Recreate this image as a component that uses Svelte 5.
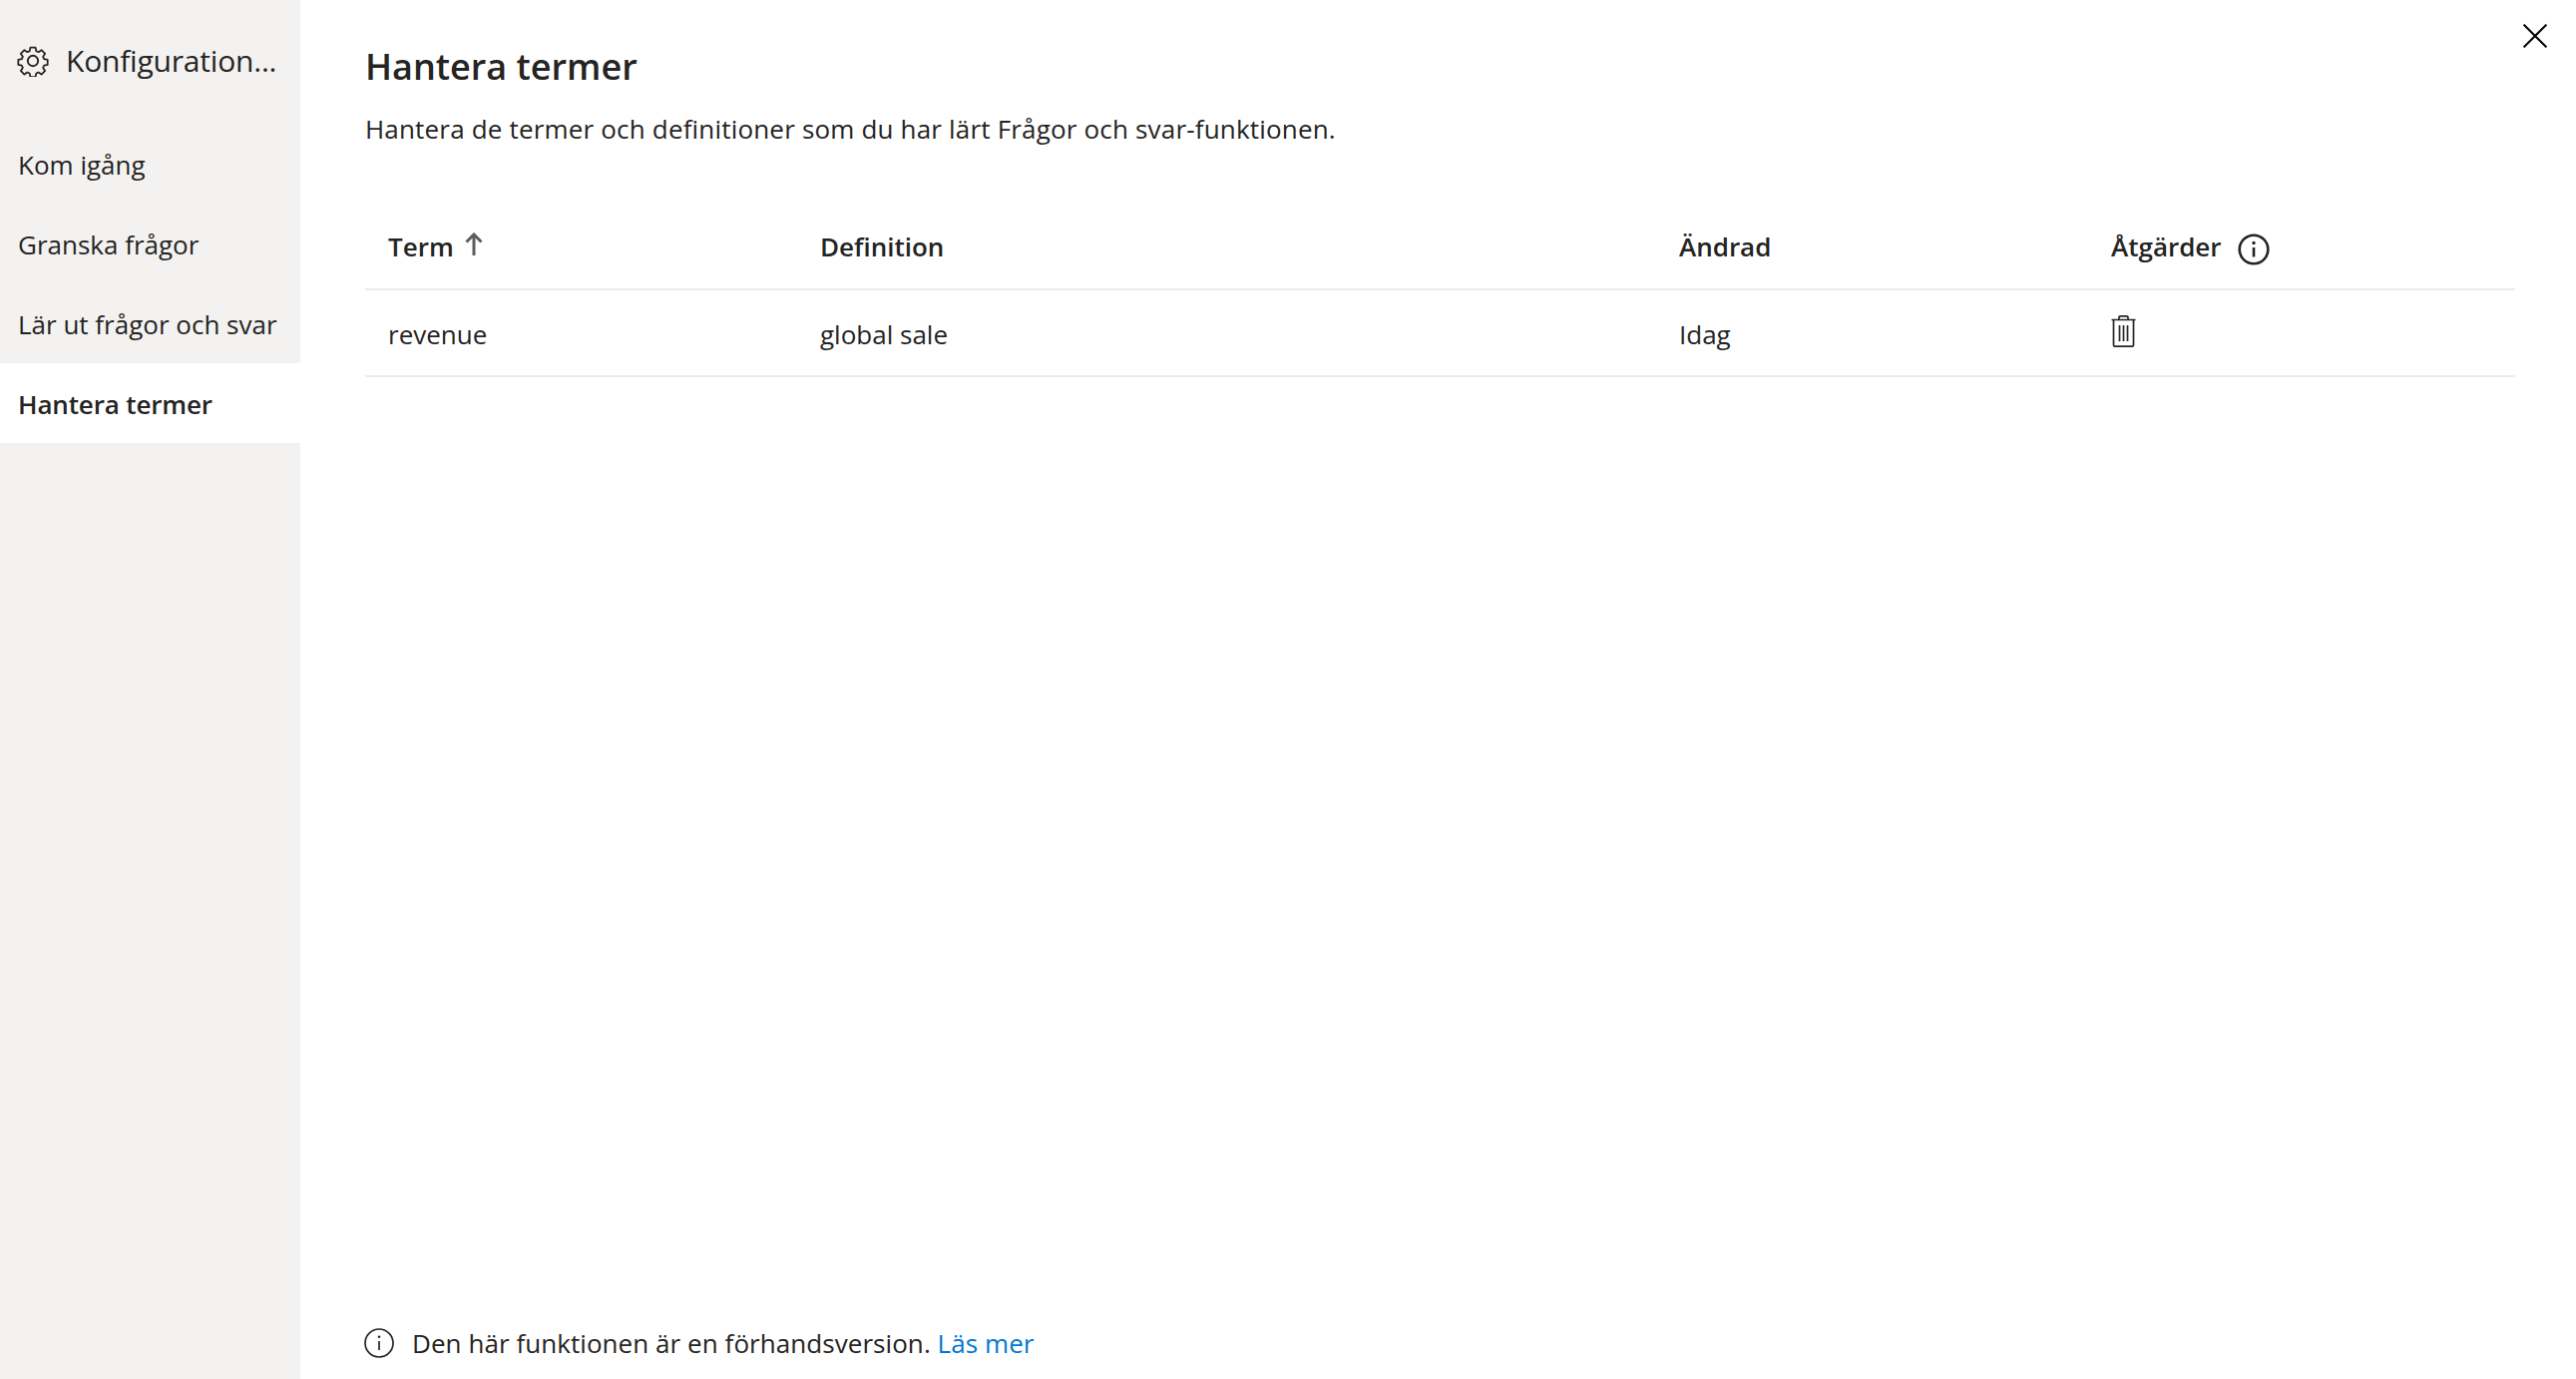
<script>
  const navItems = [
    { label: 'Kom igång', active: false },
    { label: 'Granska frågor', active: false },
    { label: 'Lär ut frågor och svar', active: false },
    { label: 'Hantera termer', active: true },
  ];
  const terms = [{ term: 'revenue', definition: 'global sale', changed: 'Idag' }];
</script>

<div class="page">
  <aside class="sidebar">
    <div class="sidebar-head">
      <svg class="gear" viewBox="0 0 32 32" fill="none" stroke="#252423" stroke-width="1.9" stroke-linejoin="round">
        <path d="M13.2 1.6h5.6l.8 3.9 2.4 1 3.3-2.2 3.9 3.9-2.2 3.3 1 2.4 3.9.8v5.6l-3.9.8-1 2.4 2.2 3.3-3.9 3.9-3.3-2.2-2.4 1-.8 3.9h-5.6l-.8-3.9-2.4-1-3.3 2.2-3.900-3.900 2.200-3.300-1-2.400-3.900-.8v-5.600l3.900-.8 1-2.400-2.200-3.300 3.900-3.900 3.300 2.200 2.400-1z" transform="translate(1.2 1.2) scale(.925)"/>
        <circle cx="16" cy="16" r="5.200"/>
      </svg>
      <span>Konfiguration...</span>
    </div>
    <nav>
      {#each navItems as item}
        <div class="nav-item" class:active={item.active}>{item.label}</div>
      {/each}
    </nav>
  </aside>

  <main class="content">
    <button class="close" aria-label="Stäng">
      <svg viewBox="0 0 24 24" stroke="#000" stroke-width="2" fill="none"><path d="M.6.6l22.800 22.800M23.400.6L.6 23.400"/></svg>
    </button>

    <h1>Hantera termer</h1>
    <p class="lead">Hantera de termer och definitioner som du har lärt Frågor och svar-funktionen.</p>

    <div class="table">
      <div class="row head">
        <div class="cell">
          Term
          <svg class="sort" viewBox="0 0 20 24" fill="none" stroke="#605e5c" stroke-width="3"><path d="M10 23V2M2.500 9.500L10 2l7.500 7.500"/></svg>
        </div>
        <div class="cell">Definition</div>
        <div class="cell">Ändrad</div>
        <div class="cell actions">
          Åtgärder
          <svg class="info" viewBox="0 0 32 32" fill="none" stroke="#252423">
            <circle cx="16" cy="16" r="14.300" stroke-width="2.600"/>
            <path d="M16 14v9.500" stroke-width="2.600"/>
            <circle cx="16" cy="9.500" r="1.700" fill="#252423" stroke="none"/>
          </svg>
        </div>
      </div>
      {#each terms as t}
        <div class="row body">
          <div class="cell">{t.term}</div>
          <div class="cell">{t.definition}</div>
          <div class="cell">{t.changed}</div>
          <div class="cell">
            <svg class="trash" viewBox="0 0 25 32" fill="none" stroke="#252423" stroke-width="1.700">
              <path d="M.5 4.500h24M2.500 4.500v25.200q0 1.500 1.500 1.500h17q1.500 0 1.500-1.500V4.500M8 4.500V2.200q0-1.300 1.300-1.300h6.400q1.300 0 1.300 1.300v2.300M8.500 10v16M12.500 10v16M16.500 10v16"/>
            </svg>
          </div>
        </div>
      {/each}
    </div>

    <footer>
      <svg class="foot-info" viewBox="0 0 30 30" fill="none" stroke="#252423" stroke-width="1.700">
        <circle cx="15" cy="15" r="14"/>
        <path d="M15 13v9"/>
        <circle cx="15" cy="8.800" r="1.300" fill="#252423" stroke="none"/>
      </svg>
      <span>Den här funktionen är en förhandsversion. <a href="#top">Läs mer</a></span>
    </footer>
  </main>
</div>

<style>
  :global(body) {
    margin: 0;
    background: #fff;
  }

  .page {
    display: flex;
    height: 1382px;
    font-family: "Open Sans", "Noto Sans", sans-serif;
    font-size: 26px;
    color: #252423;
  }

  .sidebar {
    width: 301px;
    flex: none;
    background: #f3f2f1;
  }

  .sidebar-head {
    display: flex;
    align-items: center;
    gap: 17px;
    height: 124px;
    padding-left: 17px;
    padding-bottom: 3px;
    box-sizing: border-box;
    font-size: 30px;
    letter-spacing: -0.2px;
    white-space: nowrap;
  }

  .gear {
    width: 32px;
    height: 32px;
    flex: none;
  }

  .nav-item {
    height: 80px;
    line-height: 82px;
    padding-left: 18px;
    white-space: nowrap;
  }

  .nav-item.active {
    background: #fff;
    font-weight: 600;
    letter-spacing: -0.15px;
  }

  .content {
    position: relative;
    flex: 1;
    display: flex;
    flex-direction: column;
    padding: 43px 61px 0 65px;
  }

  .close {
    position: absolute;
    top: 24px;
    right: 29px;
    width: 24px;
    height: 24px;
    padding: 0;
    border: 0;
    background: none;
  }

  .close svg {
    display: block;
  }

  h1 {
    margin: 0;
    font-size: 36px;
    font-weight: 600;
    line-height: 48px;
    color: #252423;
  }

  .lead {
    margin: 20px 0 0;
    line-height: 36px;
    letter-spacing: 0.18px;
  }

  .table {
    margin-top: 61px;
    flex: 1;
  }

  .row {
    display: grid;
    grid-template-columns: 433px 861px 433px 1fr;
    height: 87px;
    border-bottom: 2px solid #edebe9;
    align-items: center;
    box-sizing: border-box;
  }

  .row.head {
    font-weight: 600;
    height: 83px;
  }

  .cell {
    display: flex;
    align-items: center;
    padding-left: 23px;
  }

  .head .cell {
    padding-bottom: 3px;
  }

  .body .cell {
    padding-top: 2px;
  }

  .sort {
    width: 20px;
    height: 24px;
    margin-left: 10px;
    margin-bottom: 4px;
  }

  .info {
    width: 32px;
    height: 32px;
    margin-left: 16px;
    margin-top: 5px;
  }

  .trash {
    width: 25px;
    height: 32px;
    margin-bottom: 6px;
  }

  footer {
    display: flex;
    align-items: center;
    gap: 18px;
    height: 72px;
    box-sizing: border-box;
    letter-spacing: 0.06px;
  }

  .foot-info {
    width: 30px;
    height: 30px;
    margin-left: -1px;
  }

  a {
    color: #0078d4;
    text-decoration: none;
  }
</style>
